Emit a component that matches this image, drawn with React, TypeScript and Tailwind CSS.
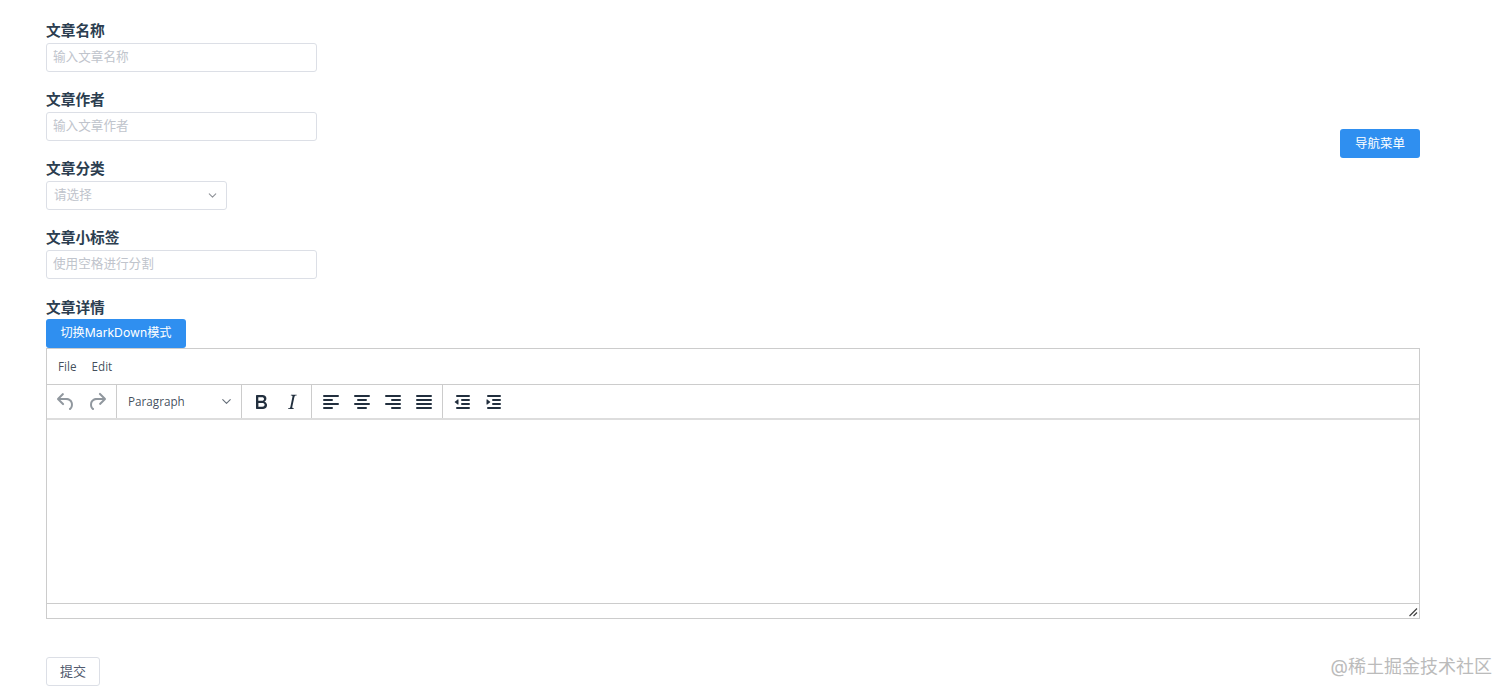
import { ChevronDown } from "lucide-react";
import type { ReactNode } from "react";

const cjk = "font-['Inter','Noto_Sans_CJK_SC',sans-serif]";

const Icon = ({ d, muted }: { d: string; muted?: boolean }) => (
  <svg width="24" height="24" viewBox="0 0 24 24" className={muted ? "fill-[#222f3e]/50" : "fill-[#222f3e]"}>
    <path d={d} />
  </svg>
);

const icons = {
  undo: "M6.4 8H12c3.7 0 6.2 2 6.8 5.1.6 2.7-.4 5.6-2.3 6.8a1 1 0 0 1-1-1.8c1.1-.6 1.8-2.7 1.4-4.6-.5-2.1-2.1-3.5-4.9-3.5H6.4l3.3 3.3a1 1 0 1 1-1.4 1.4l-5-5a1 1 0 0 1 0-1.4l5-5a1 1 0 0 1 1.4 1.4L6.4 8z",
  redo: "M17.6 10H12c-2.8 0-4.4 1.4-4.9 3.5-.4 2 .3 4 1.4 4.6a1 1 0 1 1-1 1.8c-2-1.2-2.9-4.1-2.3-6.8.6-3 3-5.1 6.8-5.1h5.6l-3.3-3.3a1 1 0 1 1 1.4-1.4l5 5a1 1 0 0 1 0 1.4l-5 5a1 1 0 0 1-1.4-1.4l3.3-3.3z",
  bold: "M7.8 19c-.3 0-.5 0-.6-.2l-.2-.5V5.7c0-.2 0-.4.2-.5l.6-.2h5c1.5 0 2.7.3 3.5 1 .7.6 1.1 1.4 1.1 2.5a3 3 0 0 1-.6 1.9c-.4.6-1 1-1.6 1.2.4.1.9.3 1.3.6s.8.7 1 1.2c.4.4.5 1 .5 1.6 0 1.3-.4 2.3-1.3 3-.8.7-2.1 1-3.8 1H7.8zm5-8.3c.6 0 1.2-.1 1.6-.5.4-.3.6-.7.6-1.3 0-1.1-.8-1.7-2.3-1.7H9.3v3.5h3.4zm.5 6c.7 0 1.3-.1 1.7-.4.4-.4.6-.9.6-1.5s-.2-1-.7-1.4c-.4-.3-1-.4-2-.4H9.4v3.8h4z",
  italic: "M16.7 4.7l-.1.9h-.3c-.6 0-1 0-1.4.3-.3.3-.4.6-.5 1.1l-2.1 9.8v.6c0 .5.4.8 1.4.8h.2l-.2.8H8l.2-.8h.2c1.1 0 1.8-.5 2-1.5l2-9.8.1-.5c0-.6-.4-.8-1.4-.8h-.3l.2-.9h5.8z",
  alignLeft: "M5 5h14a1 1 0 1 1 0 2H5a1 1 0 1 1 0-2zm0 4h8a1 1 0 1 1 0 2H5a1 1 0 1 1 0-2zm0 4h14a1 1 0 1 1 0 2H5a1 1 0 1 1 0-2zm0 4h8a1 1 0 1 1 0 2H5a1 1 0 1 1 0-2z",
  alignCenter: "M5 5h14a1 1 0 1 1 0 2H5a1 1 0 1 1 0-2zm3 4h8a1 1 0 1 1 0 2H8a1 1 0 1 1 0-2zm-3 4h14a1 1 0 1 1 0 2H5a1 1 0 1 1 0-2zm3 4h8a1 1 0 1 1 0 2H8a1 1 0 1 1 0-2z",
  alignRight: "M5 5h14a1 1 0 1 1 0 2H5a1 1 0 1 1 0-2zm6 4h8a1 1 0 1 1 0 2h-8a1 1 0 1 1 0-2zm-6 4h14a1 1 0 1 1 0 2H5a1 1 0 1 1 0-2zm6 4h8a1 1 0 1 1 0 2h-8a1 1 0 1 1 0-2z",
  justify: "M5 5h14a1 1 0 1 1 0 2H5a1 1 0 1 1 0-2zm0 4h14a1 1 0 1 1 0 2H5a1 1 0 1 1 0-2zm0 4h14a1 1 0 1 1 0 2H5a1 1 0 1 1 0-2zm0 4h14a1 1 0 1 1 0 2H5a1 1 0 1 1 0-2z",
  outdent: "M7 5h12a1 1 0 1 1 0 2H7a1 1 0 1 1 0-2zm5 4h7a1 1 0 1 1 0 2h-7a1 1 0 1 1 0-2zm0 4h7a1 1 0 1 1 0 2h-7a1 1 0 1 1 0-2zm-5 4h12a1 1 0 1 1 0 2H7a1 1 0 1 1 0-2zM4.5 12l3.2-2.6c.3-.2.8 0 .8.4v4.4c0 .4-.5.6-.8.4L4.5 12z",
  indent: "M7 5h12a1 1 0 1 1 0 2H7a1 1 0 1 1 0-2zm5 4h7a1 1 0 1 1 0 2h-7a1 1 0 1 1 0-2zm0 4h7a1 1 0 1 1 0 2h-7a1 1 0 1 1 0-2zm-5 4h12a1 1 0 1 1 0 2H7a1 1 0 1 1 0-2zM9.5 12l-3.2 2.6c-.3.2-.8 0-.8-.4V9.8c0-.4.5-.6.8-.4L9.5 12z",
};

const Field = ({ label, children }: { label: string; children: ReactNode }) => (
  <div className="flex flex-col">
    <label className="h-[25px] text-[14.7px] leading-[26px] font-semibold text-[#2c3e50]">{label}</label>
    {children}
  </div>
);

const TextInput = ({ placeholder }: { placeholder: string }) => (
  <input
    placeholder={placeholder}
    className="h-[29px] w-[271px] rounded-[3px] border border-[#dcdfe6] bg-white px-[6px] pb-[2px] text-[12.6px] outline-none placeholder:text-[#c0c4cc]"
  />
);

const ToolButton = ({ d, muted }: { d: string; muted?: boolean }) => (
  <span className="flex h-[34px] w-[31px] items-center justify-center">
    <Icon d={d} muted={muted} />
  </span>
);

const Group = ({ children, className }: { children: ReactNode; className?: string }) => (
  <div className={`flex items-center border-r border-[#cccccc] ${className ?? ""}`}>{children}</div>
);

export default function App() {
  return (
    <div className={`relative h-[697px] overflow-hidden bg-white pt-[18px] pr-[92px] pl-[46px] ${cjk}`}>
      <div className="flex items-center justify-between">
        <div className="flex flex-col gap-[15px]">
          <Field label="文章名称">
            <TextInput placeholder="输入文章名称" />
          </Field>
          <Field label="文章作者">
            <TextInput placeholder="输入文章作者" />
          </Field>
          <Field label="文章分类">
            <div className="flex h-[29px] w-[181px] items-center justify-between rounded-[3px] border border-[#dcdfe6] pr-[7px] pl-[7px] text-[12.6px] text-[#c0c4cc]">
              请选择
              <ChevronDown size={13} strokeWidth={2} className="text-[#909399]" />
            </div>
          </Field>
          <Field label="文章小标签">
            <TextInput placeholder="使用空格进行分割" />
          </Field>
        </div>
        <button className="mb-[10px] h-[29px] w-[80px] rounded-[3px] bg-[#2f8ff0] pt-[2px] text-[12.5px] text-white">导航菜单</button>
      </div>

      <div className="mt-[16px]">
        <label className="block h-[24px] text-[14.7px] leading-[26px] font-semibold text-[#2c3e50]">文章详情</label>
        <button className="block h-[29px] w-[140px] rounded-[3px] bg-[#2f8ff0] text-[12.2px] text-white">切换MarkDown模式</button>
        <div className="flex h-[271px] flex-col border border-[#cccccc] font-['Open_Sans',sans-serif] text-[11.7px] text-[#222f3e]/85">
          <div className="flex h-[36px] items-center gap-[15px] border-b border-[#cccccc] pl-[11px]">
            <span>File</span>
            <span>Edit</span>
          </div>
          <div className="flex h-[35px] border-b-2 border-[#dddddd]">
            <Group className="w-[70px] pl-[3px]">
              <ToolButton d={icons.undo} muted />
              <ToolButton d={icons.redo} muted />
            </Group>
            <Group className="w-[125px] justify-between pr-[7px] pl-[11px]">
              <span>Paragraph</span>
              <ChevronDown size={15} strokeWidth={1.75} className="text-[#222f3e]/70" />
            </Group>
            <Group className="w-[70px] pl-[3px]">
              <ToolButton d={icons.bold} />
              <ToolButton d={icons.italic} />
            </Group>
            <Group className="w-[131px] pl-[3px]">
              <ToolButton d={icons.alignLeft} />
              <ToolButton d={icons.alignCenter} />
              <ToolButton d={icons.alignRight} />
              <ToolButton d={icons.justify} />
            </Group>
            <div className="flex items-center pl-[3px]">
              <ToolButton d={icons.outdent} />
              <ToolButton d={icons.indent} />
            </div>
          </div>
          <div className="flex-1" />
          <div className="relative h-[15px] border-t border-[#cccccc]">
            <svg width="10" height="10" viewBox="0 0 10 10" className="absolute right-[1px] bottom-[1px] stroke-[#444]">
              <path d="M1.5 9 9 1.5M5.5 9 9 5.5" strokeWidth="1.2" fill="none" />
            </svg>
          </div>
        </div>
      </div>

      <button className="mt-[38px] block h-[29px] w-[54px] rounded-[3px] border border-[#dcdfe6] bg-white text-[13px] text-[#515a6e]">提交</button>

      <span className="absolute right-[20px] bottom-[17px] text-[18px] leading-[26px] text-[#bbbbbb]">@稀土掘金技术社区</span>
    </div>
  );
}
